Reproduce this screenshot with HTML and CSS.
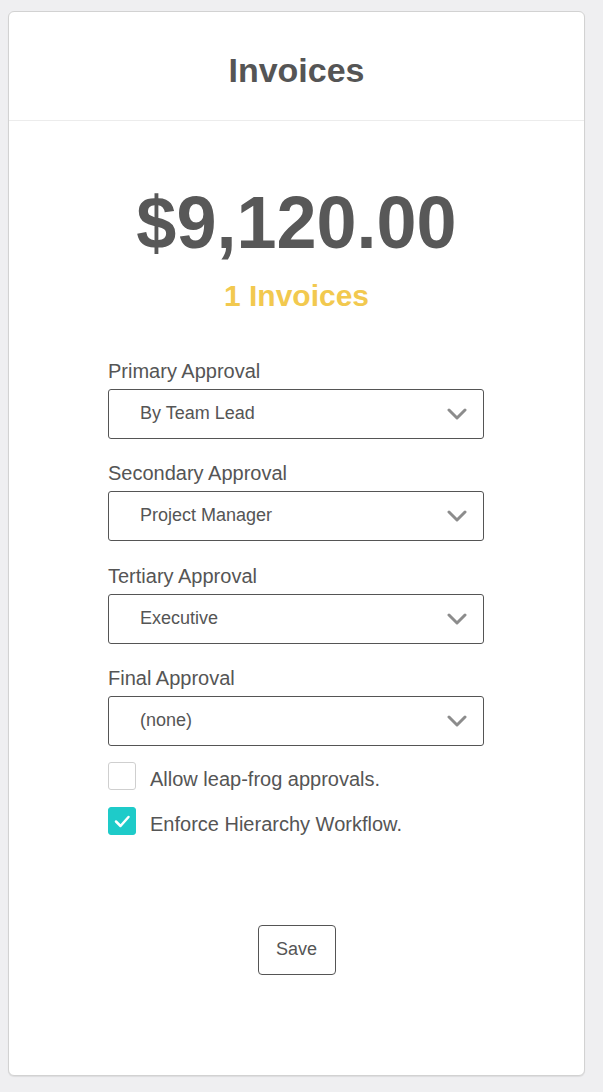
FILE: index.html
```html
<!DOCTYPE html>
<html>
<head>
<meta charset="utf-8">
<link rel="stylesheet" href="styles.css">
</head>
<body>
<div class="card">
  <div class="card-header">
    <h1 class="title">Invoices</h1>
  </div>
  <div class="card-body">
    <div class="amount">$9,120.00</div>
    <div class="count">1 Invoices</div>
    <div class="form">
      <div class="field">
        <div class="label">Primary Approval</div>
        <div class="select"><span>By Team Lead</span><svg class="chev" width="20" height="12" viewBox="0 0 20 12"><path d="M2 2 L10 10 L18 2" fill="none" stroke="#8c8c8c" stroke-width="3" stroke-linecap="round" stroke-linejoin="round"/></svg></div>
      </div>
      <div class="field">
        <div class="label">Secondary Approval</div>
        <div class="select"><span>Project Manager</span><svg class="chev" width="20" height="12" viewBox="0 0 20 12"><path d="M2 2 L10 10 L18 2" fill="none" stroke="#8c8c8c" stroke-width="3" stroke-linecap="round" stroke-linejoin="round"/></svg></div>
      </div>
      <div class="field">
        <div class="label">Tertiary Approval</div>
        <div class="select"><span>Executive</span><svg class="chev" width="20" height="12" viewBox="0 0 20 12"><path d="M2 2 L10 10 L18 2" fill="none" stroke="#8c8c8c" stroke-width="3" stroke-linecap="round" stroke-linejoin="round"/></svg></div>
      </div>
      <div class="field">
        <div class="label">Final Approval</div>
        <div class="select"><span>(none)</span><svg class="chev" width="20" height="12" viewBox="0 0 20 12"><path d="M2 2 L10 10 L18 2" fill="none" stroke="#8c8c8c" stroke-width="3" stroke-linecap="round" stroke-linejoin="round"/></svg></div>
      </div>
      <div class="checks">
        <div class="check-row">
          <span class="box"></span>
          <span class="check-label">Allow leap-frog approvals.</span>
        </div>
        <div class="check-row">
          <span class="box checked"><svg width="28" height="28" viewBox="0 0 28 28"><path d="M8 14.5 L12.5 19 L20.5 10" fill="none" stroke="#fff" stroke-width="2.5" stroke-linecap="round" stroke-linejoin="round"/></svg></span>
          <span class="check-label">Enforce Hierarchy Workflow.</span>
        </div>
      </div>
    </div>
    <div class="actions">
      <button class="btn">Save</button>
    </div>
  </div>
</div>
</body>
</html>
```
FILE: styles.css
```css
html, body {
  margin: 0;
  padding: 0;
}
body {
  background: #efeff1;
  padding: 11px 18px 16px 8px;
  font-family: "Liberation Sans", Arial, sans-serif;
  color: #555;
}
.card {
  background: #fff;
  border: 1px solid #d2d2d2;
  border-radius: 6px;
  box-shadow: 0 1px 1px rgba(0,0,0,0.08);
  box-sizing: border-box;
  height: 1065px;
}
.card-header {
  height: 109px;
  border-bottom: 1px solid #ececec;
  display: flex;
  align-items: center;
  justify-content: center;
  padding-top: 8px;
  box-sizing: border-box;
}
.title {
  margin: 0;
  font-size: 34px;
  font-weight: bold;
  line-height: 1;
  color: #555;
}
.card-body {
  display: flex;
  flex-direction: column;
  align-items: center;
}
.amount {
  margin-top: 65px;
  font-size: 72px;
  font-weight: bold;
  line-height: 1;
  color: #585858;
  transform: scaleY(1.03);
}
.count {
  margin-top: 23px;
  font-size: 30px;
  font-weight: bold;
  line-height: 1;
  color: #f2c94f;
}
.form {
  width: 376px;
  margin-top: 48px;
  align-self: flex-start;
  margin-left: 99px;
  display: flex;
  flex-direction: column;
  gap: 22.3px;
}
.field {
  display: flex;
  flex-direction: column;
  gap: 6px;
}
.label {
  font-size: 20px;
  line-height: 24px;
  color: #555;
}
.select {
  height: 50px;
  box-sizing: border-box;
  border: 1px solid #555;
  border-radius: 3px;
  display: flex;
  align-items: center;
  justify-content: space-between;
  padding: 0 16px 0 31px;
  font-size: 18px;
  color: #555;
}
.select span {
  margin-top: -1px;
}
.chev {
  display: block;
}
.checks {
  margin-top: -6.3px;
  display: flex;
  flex-direction: column;
  gap: 17px;
}
.check-row {
  display: flex;
  align-items: center;
  gap: 14px;
  height: 28px;
}
.box {
  width: 28px;
  height: 28px;
  box-sizing: border-box;
  border: 1px solid #cfcfcf;
  border-radius: 3px;
  flex: none;
}
.box.checked {
  background: #1ecbc9;
  border-color: #1ecbc9;
}
.box svg {
  display: block;
  margin: -1px;
}
.check-label {
  font-size: 20px;
  line-height: 24px;
  margin-top: 7px;
  color: #555;
}
.actions {
  margin-top: 90px;
}
.btn {
  width: 78px;
  height: 50px;
  background: #fff;
  border: 1px solid #555;
  border-radius: 4px;
  font-family: "Liberation Sans", Arial, sans-serif;
  font-size: 18px;
  color: #555;
  padding: 0;
  padding-bottom: 1px;
}
```
